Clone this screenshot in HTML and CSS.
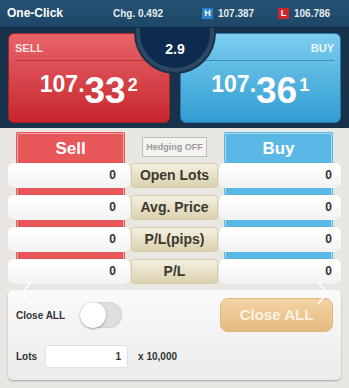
FILE: index.html
```html
<!DOCTYPE html>
<html>
<head>
<meta charset="utf-8">
<link rel="stylesheet" href="styles.css">
</head>
<body>
<div class="app">
  <header class="top">
    <span class="title">One-Click</span>
    <span class="chg">Chg. 0.492</span>
    <span class="hl"><b class="badge high">H</b>107.387</span>
    <span class="hl"><b class="badge low">L</b>106.786</span>
  </header>

  <section class="quotes">
    <div class="quote sell">
      <div class="qlabel">SELL</div>
      <div class="price"><span class="p1">107.</span><span class="p2">33</span><span class="p3">2</span></div>
    </div>
    <div class="quote buy">
      <div class="qlabel">BUY</div>
      <div class="price"><span class="p1">107.</span><span class="p2">36</span><span class="p3">1</span></div>
    </div>
    <div class="spread">2.9</div>
  </section>

  <section class="trade">
    <div class="side sellside">
      <div class="col">
        <div class="colhead">Sell</div>
        <div class="cell">0</div>
        <div class="cell">0</div>
        <div class="cell">0</div>
        <div class="cell">0</div>
      </div>
    </div>
    <div class="mid">
      <div class="hedge">Hedging OFF</div>
      <div class="tag">Open Lots</div>
      <div class="tag">Avg. Price</div>
      <div class="tag">P/L(pips)</div>
      <div class="tag">P/L</div>
    </div>
    <div class="side buyside">
      <div class="col">
        <div class="colhead">Buy</div>
        <div class="cell">0</div>
        <div class="cell">0</div>
        <div class="cell">0</div>
        <div class="cell">0</div>
      </div>
    </div>
  </section>

  <section class="panel">
    <div class="prow">
      <span class="plabel">Close ALL</span>
      <span class="toggle"><span class="knob"></span></span>
      <span class="closeall">Close ALL</span>
    </div>
    <div class="prow">
      <span class="plabel">Lots</span>
      <span class="lots">1</span>
      <span class="mult">x 10,000</span>
    </div>
  </section>

  <svg class="chev chev-left" width="14" height="26" viewBox="0 0 14 26"><polyline points="11,2 3,12 11,22" fill="none" stroke="#ffffff" stroke-width="2" stroke-linecap="round" stroke-linejoin="round"/></svg>
  <svg class="chev chev-right" width="14" height="26" viewBox="0 0 14 26"><polyline points="3,2 11,12 3,22" fill="none" stroke="#ffffff" stroke-width="2" stroke-linecap="round" stroke-linejoin="round"/></svg>
</div>
</body>
</html>
```

FILE: styles.css
```css
* { box-sizing: border-box; }
html, body { margin: 0; padding: 0; }
body {
  width: 349px;
  height: 388px;
  overflow: hidden;
  background: #e9e7e2;
  font-family: "Liberation Sans", Arial, sans-serif;
}
.app { position: relative; width: 349px; height: 388px; }

/* header */
.top {
  height: 28px;
  display: grid;
  grid-template-columns: 106px 89px 76px auto;
  align-items: center;
  padding: 0 0 1px 7px;
  background: linear-gradient(#255373, #1e4767);
  border-bottom: 1px solid #10283e;
  color: #e6ebf0;
  font-weight: bold;
  font-size: 10px;
}
.title { font-size: 12px; color: #ffffff; }
.hl { display: flex; align-items: center; }
.badge {
  width: 11px; height: 11px;
  margin-right: 5px;
  font-size: 9px; line-height: 11px;
  text-align: center; color: #fff;
  border-radius: 1px;
}
.badge.high { background: #2c82c6; }
.badge.low { background: #cf242b; }

/* quotes band */
.quotes {
  position: relative;
  overflow: hidden;
  height: 100px;
  padding: 5px 8px;
  display: flex;
  gap: 10px;
  background: #19324b;
}
.quote {
  flex: 1;
  height: 90px;
  border-radius: 6px;
  padding: 9px 6px 0;
  color: #fff;
}
.sell {
  background: linear-gradient(#e8646a, #c7272e);
  border: 1px solid #a3232a;
}
.buy {
  background: linear-gradient(#7dcdef, #2f9dd2);
  border: 1px solid #2578a7;
}
.qlabel {
  font-size: 11px;
  line-height: 11px;
  font-weight: bold;
  padding-bottom: 6px;
}
.sell .qlabel { color: #f8e0e0; border-bottom: 1px solid #b3343a; }
.buy .qlabel { color: #eef8fd; text-align: right; border-bottom: 1px solid #3a90bf; }
.price {
  margin-top: 11px;
  display: flex;
  justify-content: center;
  align-items: flex-start;
  font-weight: bold;
  line-height: 1;
}
.p1 { font-size: 23px; margin-top: 1px; }
.p2 { font-size: 37px; }
.p3 { font-size: 18px; margin-top: 4px; margin-left: 2px; }

.spread {
  position: absolute;
  left: 136px;
  top: -34px;
  width: 70px;
  height: 26px;
  padding-top: 44px;
  box-sizing: content-box;
  border-radius: 50%;
  border: 4px solid #2c4862;
  box-shadow: 0 0 0 2px #19324b;
  background: #0d2b4e;
  color: #fff;
  font-weight: bold;
  font-size: 14px;
  line-height: 14px;
  text-align: center;
}

/* trade table */
.trade {
  display: flex;
  gap: 1px;
  padding: 4px 8px 0;
}
.side { width: 122px; }
.sellside .col { margin: 0 5px 0 8px; background: #e8585a; box-shadow: inset 0 0 0 1px #e8585a, inset 0 0 0 2px #f5a5a5; }
.buyside .col { margin: 0 8px 0 5px; background: #5bb8e6; box-shadow: inset 0 0 0 1px #5bb8e6, inset 0 0 0 2px #a9dcf4; }
.col {
  display: flex;
  flex-direction: column;
  gap: 7px;
  border-radius: 2px;
}
.colhead {
  height: 24px;
  padding-top: 10px;
  line-height: 14px;
  font-size: 17px;
  font-weight: bold;
  text-align: center;
  color: #fff;
}
.cell {
  height: 25px;
  border-radius: 5px;
  background: linear-gradient(#ffffff, #f3f3f3);
  box-shadow: 0 0 1px rgba(0,0,0,0.2);
  font-size: 12px;
  line-height: 25px;
  font-weight: bold;
  color: #333;
  text-align: right;
}
.sellside .cell { margin: 0 -5px 0 -8px; padding-right: 14px; }
.buyside .cell { margin: 0 -8px 0 -5px; padding-right: 9px; }

.mid {
  width: 87px;
  display: flex;
  flex-direction: column;
  gap: 7px;
}
.hedge {
  width: 65px;
  height: 20px;
  margin: 5px auto -1px;
  border: 1px solid #bdbcb8;
  background: #f4f3f0;
  color: #9a9a9a;
  font-size: 9px;
  line-height: 18px;
  font-weight: bold;
  text-align: center;
}
.tag {
  height: 25px;
  border-radius: 3px;
  border: 1px solid #d6cdaa;
  background: linear-gradient(#f5f0e0, #dbd1b0);
  color: #3b392d;
  font-size: 14px;
  line-height: 23px;
  font-weight: bold;
  text-align: center;
}

/* bottom panel */
.panel {
  margin: 6px 8px 0;
  height: 90px;
  padding: 8px 8px 12px;
  display: flex;
  flex-direction: column;
  gap: 13px;
  border-radius: 5px;
  background: linear-gradient(#fafafa, #ebebeb);
  box-shadow: 0 1px 2px rgba(0,0,0,0.3);
}
.prow {
  display: flex;
  align-items: center;
  font-size: 10px;
  font-weight: bold;
  color: #333;
}
.prow:first-child { height: 34px; }
.prow:last-child { height: 23px; }
.toggle {
  width: 42px;
  height: 26px;
  margin-left: 15px;
  border-radius: 13px;
  background: #dedede;
  box-shadow: inset 0 0 2px rgba(0,0,0,0.15);
  display: flex;
}
.knob {
  width: 26px;
  height: 26px;
  border-radius: 50%;
  background: #fff;
  box-shadow: 0 1px 2px rgba(0,0,0,0.3), 0 0 1px rgba(0,0,0,0.2);
}
.closeall {
  margin-left: auto;
  width: 113px;
  height: 34px;
  border-radius: 8px;
  border: 1px solid #e2b77e;
  background: linear-gradient(#f3d4a6, #e5ba7f);
  color: #fdf2e2;
  font-size: 15px;
  line-height: 32px;
  text-align: center;
}
.lots {
  width: 83px;
  height: 23px;
  margin-left: 8px;
  border-radius: 3px;
  border: 1px solid #e0e0e0;
  background: #fff;
  line-height: 21px;
  text-align: right;
  padding-right: 6px;
}
.mult { margin-left: 10px; }

.chev { position: absolute; top: 281px; opacity: 0.9; }
.chev-left { left: 19px; }
.chev-right { left: 316px; }
```
